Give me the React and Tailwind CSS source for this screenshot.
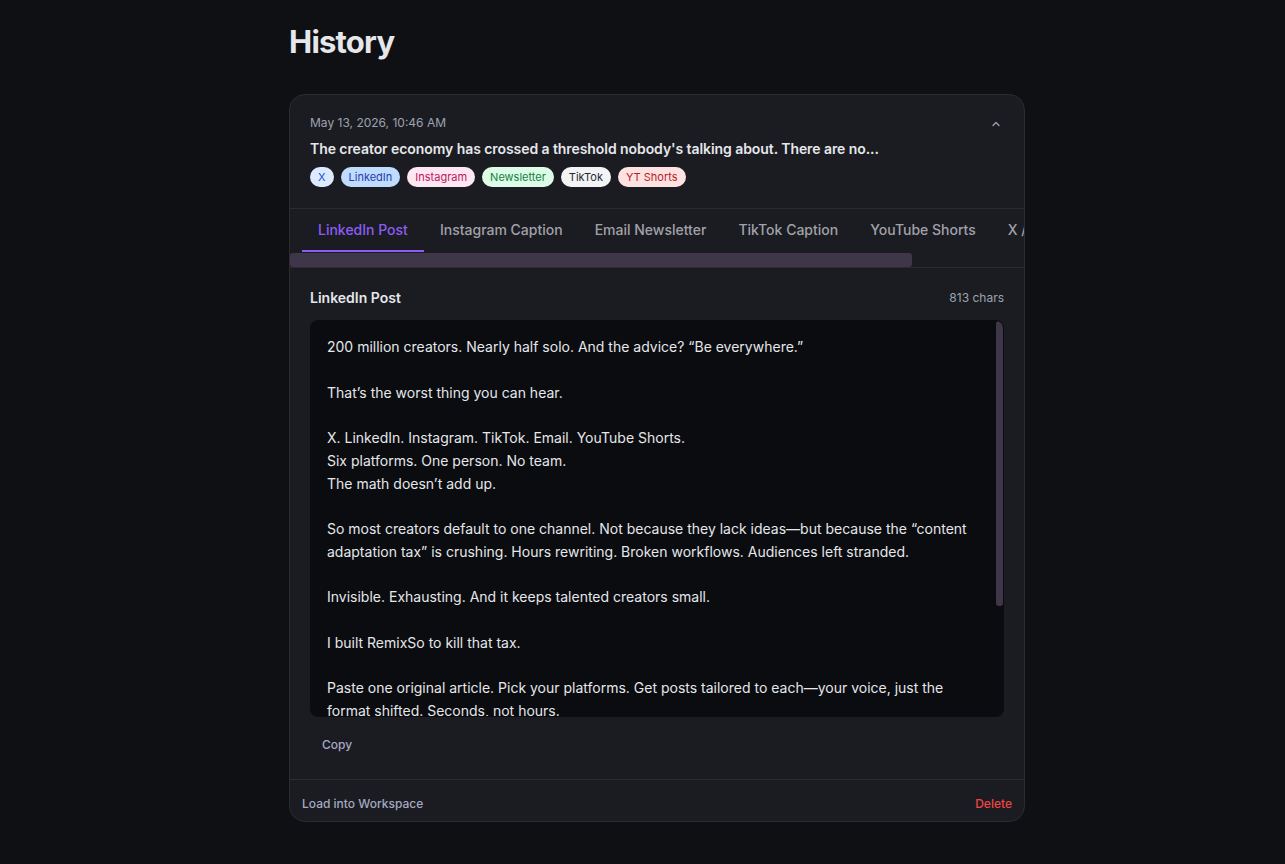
import React, { useState } from 'react';

const chips = [
  { label: 'X', cls: 'bg-[#dbeafe] text-[#1d4ed8]' },
  { label: 'LinkedIn', cls: 'bg-[#bfdbfe] text-[#1e40af]' },
  { label: 'Instagram', cls: 'bg-[#fce7f3] text-[#be185d]' },
  { label: 'Newsletter', cls: 'bg-[#dcfce7] text-[#15803d]' },
  { label: 'TikTok', cls: 'bg-[#f3f4f6] text-[#1f2937]' },
  { label: 'YT Shorts', cls: 'bg-[#fee2e2] text-[#b91c1c]' },
];

const tabs = [
  'LinkedIn Post',
  'Instagram Caption',
  'Email Newsletter',
  'TikTok Caption',
  'YouTube Shorts',
  'X / Twitter Thread',
];

const postLines = [
  '200 million creators. Nearly half solo. And the advice? \u201cBe everywhere.\u201d',
  '',
  'That\u2019s the worst thing you can hear.',
  '',
  'X. LinkedIn. Instagram. TikTok. Email. YouTube Shorts.',
  'Six platforms. One person. No team.',
  'The math doesn\u2019t add up.',
  '',
  'So most creators default to one channel. Not because they lack ideas\u2014but because the \u201ccontent',
  'adaptation tax\u201d is crushing. Hours rewriting. Broken workflows. Audiences left stranded.',
  '',
  'Invisible. Exhausting. And it keeps talented creators small.',
  '',
  'I built RemixSo to kill that tax.',
  '',
  'Paste one original article. Pick your platforms. Get posts tailored to each\u2014your voice, just the',
  'format shifted. Seconds, not hours.',
];

const ChevronUp = () => (
  <svg width="12" height="12" viewBox="0 0 24 24" fill="none" stroke="currentColor" strokeWidth="2.5" strokeLinecap="round" strokeLinejoin="round">
    <path d="M18 15l-6-6-6 6" />
  </svg>
);

export default function App() {
  const [active, setActive] = useState(0);

  return (
    <div className="min-h-[864px] bg-[#0f1013] font-['Inter',sans-serif] text-[#e5e7eb]">
      <div className="ml-[289px] w-[736px] pt-[22px]">
        <h1 className="mb-[32px] text-[31px] font-bold leading-10 tracking-tight text-[#e5e7eb]">History</h1>

        <div className="overflow-hidden rounded-2xl border border-[#2a2c32] bg-[#1b1c21]">
          {/* entry header */}
          <div className="flex items-start justify-between border-b border-[#2a2c32] px-5 pt-5 pb-[21px]">
            <div>
              <div className="text-xs leading-4 text-[#9ca3af]">May 13, 2026, 10:46 AM</div>
              <div className="mt-[8px] text-sm font-semibold leading-5 tracking-[-0.005em] text-[#e5e7eb]">
                The creator economy has crossed a threshold nobody's talking about. There are no...
              </div>
              <div className="mt-[8px] flex gap-[7px]">
                {chips.map((c) => (
                  <span key={c.label} className={`rounded-full px-2 text-[11px] leading-5 ${c.cls}`}>
                    {c.label}
                  </span>
                ))}
              </div>
            </div>
            <button className="mt-[3px] mr-[2px] text-[#9ca3af]">
              <ChevronUp />
            </button>
          </div>

          {/* tabs */}
          <div className="border-b border-[#2a2c32]">
            <div className="flex overflow-hidden whitespace-nowrap px-3">
              {tabs.map((t, i) => (
                <button
                  key={t}
                  onClick={() => setActive(i)}
                  className={`border-b-2 px-4 pt-[11px] pb-[10px] text-sm font-medium leading-5 ${
                    i === active ? 'border-[#8b5cf6] text-[#8b5cf6]' : 'border-transparent text-[#a1a1aa]'
                  }`}
                >
                  {t}
                </button>
              ))}
            </div>
            <div className="h-[15px] py-[1px]">
              <div className="h-[14px] w-[622px] rounded-[3px] bg-[#3f3749]" />
            </div>
          </div>

          {/* post body */}
          <div className="px-5 pt-[20px]">
            <div className="flex items-center justify-between">
              <span className="text-sm font-semibold leading-5 text-[#e5e7eb]">LinkedIn Post</span>
              <span className="text-xs leading-4 text-[#9ca3af]">813 chars</span>
            </div>
            <div className="relative mt-[12px] h-[397px] overflow-hidden rounded-lg border border-[#0a0c0f] bg-[#0a0c0f] px-4 pt-[15px]">
              {postLines.map((line, i) => (
                <div key={i} className="h-[22.75px] text-sm leading-[22.75px] text-[#e5e7eb]">
                  {line}
                </div>
              ))}
              <div className="absolute top-0 right-0 h-[285px] w-[7px] rounded-[3px] bg-[#3f3749]" />
            </div>
            <div className="pt-[14px] pb-[24px]">
              <button className="px-3 text-xs font-medium leading-4 text-[#a5a9c4]">Copy</button>
            </div>
          </div>

          {/* footer */}
          <div className="flex items-center justify-between border-t border-[#2a2c32] px-3 pt-[16px] pb-[9px]">
            <button className="text-xs font-medium leading-4 text-[#a5a9c4]">Load into Workspace</button>
            <button className="text-xs font-medium leading-4 text-[#ef4444]">Delete</button>
          </div>
        </div>
      </div>
    </div>
  );
}
